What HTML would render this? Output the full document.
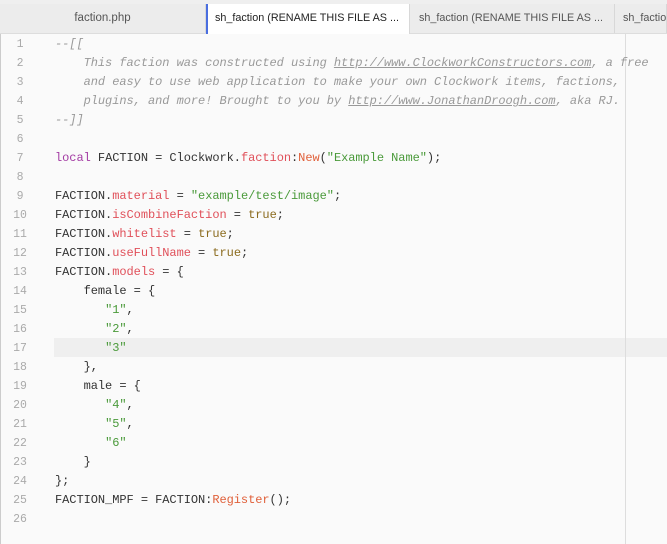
<!DOCTYPE html>
<html><head><style>
body{margin:0;width:667px;height:544px;overflow:hidden;background:#fafafa;font-family:"Liberation Sans",sans-serif;}
.tabs{position:absolute;left:0;top:0;width:667px;height:33px;background:#efefef;border-bottom:1px solid #ddd;}
.tab{position:absolute;top:4px;height:29px;line-height:29px;font-size:10.8px;color:#555;white-space:nowrap;overflow:hidden;background:#ececec;border-right:1px solid #d8d8d8;box-sizing:border-box;}
.tab.a{background:#fff;color:#222;border-left:2px solid #4a6ee0;height:30px;}
.ed{position:absolute;left:0;top:34px;width:667px;height:510px;border-left:1px solid #ccc;box-sizing:border-box;}
.margin{position:absolute;left:625px;top:34px;width:1px;height:510px;background:#ddd;}
.hl{position:absolute;left:54px;top:338px;width:613px;height:19px;background:#efefef;}
.c{position:absolute;left:55px;font:12px/19px "Liberation Mono",monospace;color:#333;white-space:pre;letter-spacing:-0.05px;}
.cm{color:#999;font-style:italic}.u{text-decoration:underline}
.p{color:#e0505a}.s{color:#4a9a3a}.k{color:#a43ca4}.t{color:#8b6b1e}.f{color:#e0603a}
</style></head><body>
<div class="tabs">
<div class="tab" style="left:0;width:206px;text-align:center;font-size:11.5px;">faction.php</div>
<div class="tab a" style="left:206px;width:204px;padding-left:7px;">sh_faction (RENAME THIS FILE AS ...</div>
<div class="tab" style="left:410px;width:205px;padding-left:9px;">sh_faction (RENAME THIS FILE AS ...</div>
<div class="tab" style="left:615px;width:52px;padding-left:8px;">sh_faction</div>
</div>
<div class="ed"></div>
<div class="hl"></div>
<div class="margin"></div>
<div class="c" style="top:35px;"><span class="cm">--[[</span>
<span class="cm">    This faction was constructed using <span class="u">http://www.ClockworkConstructors.com</span>, a free</span>
<span class="cm">    and easy to use web application to make your own Clockwork items, factions,</span>
<span class="cm">    plugins, and more! Brought to you by <span class="u">http://www.JonathanDroogh.com</span>, aka RJ.</span>
<span class="cm">--]]</span>

<span class="k">local</span> FACTION = Clockwork.<span class="p">faction</span>:<span class="f">New</span>(<span class="s">"Example Name"</span>);

FACTION.<span class="p">material</span> = <span class="s">"example/test/image"</span>;
FACTION.<span class="p">isCombineFaction</span> = <span class="t">true</span>;
FACTION.<span class="p">whitelist</span> = <span class="t">true</span>;
FACTION.<span class="p">useFullName</span> = <span class="t">true</span>;
FACTION.<span class="p">models</span> = {
    female = {
       <span class="s">"1"</span>,
       <span class="s">"2"</span>,
       <span class="s">"3"</span>
    },
    male = {
       <span class="s">"4"</span>,
       <span class="s">"5"</span>,
       <span class="s">"6"</span>
    }
};
FACTION_MPF = FACTION:<span class="f">Register</span>();
</div>
<div class="c" style="left:0;top:35px;width:40px;text-align:center;color:#aaa;font-size:11.5px;">1
2
3
4
5
6
7
8
9
10
11
12
13
14
15
16
17
18
19
20
21
22
23
24
25
26</div>
</body></html>
